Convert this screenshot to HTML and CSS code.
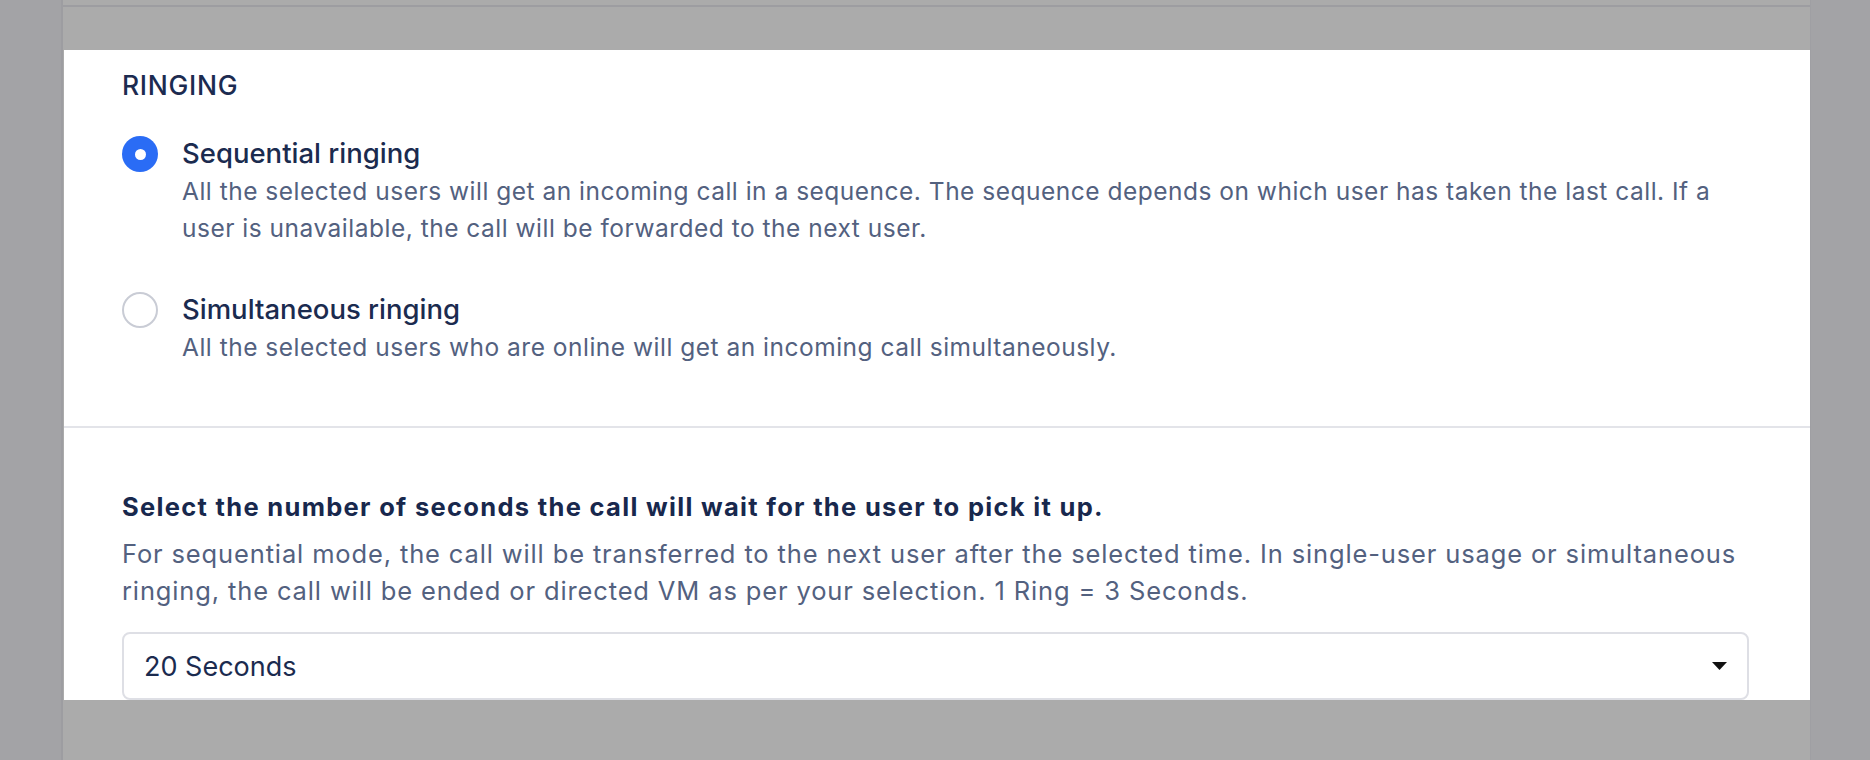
FILE: index.html
```html
<!DOCTYPE html>
<html lang="en">
<head>
<meta charset="utf-8">
<title>Ringing settings</title>
<link rel="stylesheet" href="styles.css">
</head>
<body>
<div class="page">
  <aside class="side side-left"></aside>
  <main class="main">
    <div class="topbar"></div>
    <section class="card">
      <div class="block block-ringing">
        <h2 class="section-title">RINGING</h2>
        <div class="option">
          <span class="radio radio-on"><span class="radio-dot"></span></span>
          <div class="option-text">
            <div class="option-title">Sequential ringing</div>
            <p class="option-desc">All the selected users will get an incoming call in a sequence. The sequence depends on which user has taken the last call. If a user is unavailable, the call will be forwarded to the next user.</p>
          </div>
        </div>
        <div class="option option-second">
          <span class="radio"></span>
          <div class="option-text">
            <div class="option-title">Simultaneous ringing</div>
            <p class="option-desc">All the selected users who are online will get an incoming call simultaneously.</p>
          </div>
        </div>
      </div>
      <div class="block block-wait">
        <h3 class="wait-title">Select the number of seconds the call will wait for the user to pick it up.</h3>
        <p class="wait-desc">For sequential mode, the call will be transferred to the next user after the selected time. In single-user usage or simultaneous ringing, the call will be ended or directed VM as per your selection. 1 Ring = 3 Seconds.</p>
        <div class="select">
          <span class="select-value">20 Seconds</span>
          <svg class="select-arrow" width="15" height="8" viewBox="0 0 15 8"><path d="M0 0H15L7.5 8Z" fill="#111"/></svg>
        </div>
      </div>
    </section>
  </main>
  <aside class="side side-right"></aside>
</div>
</body>
</html>
```
FILE: styles.css
```css
* { box-sizing: border-box; }
html, body { margin: 0; padding: 0; }
body {
  width: 1870px;
  height: 760px;
  overflow: hidden;
  background: #ababab;
  font-family: Inter, "Noto Sans", sans-serif;
}
.page {
  display: flex;
  height: 760px;
}
.side {
  background: #a3a3a6;
  flex: none;
}
.side-left {
  width: 63px;
  border-right: 2px solid #9d9da1;
}
.side-right {
  width: 60px;
  border-left: 1px solid #9f9fa3;
}
.main {
  flex: 1;
  display: flex;
  flex-direction: column;
  background: #ababab;
}
.topbar {
  height: 7px;
  border-bottom: 2px solid #9d9da1;
}
.card {
  margin-top: 43px;
  margin-left: 1px;
  height: 650px;
  background: #fff;
  overflow: hidden;
}
.block {
  padding: 0 61px 0 58px;
}
.block-ringing {
  padding-top: 17px;
  padding-bottom: 60px;
  border-bottom: 2px solid #e3e4e9;
}
.section-title {
  margin: 0;
  font-size: 26.5px;
  line-height: 36px;
  font-weight: 500;
  letter-spacing: 0.7px;
  color: #1c2b50;
}
.option {
  display: flex;
  align-items: flex-start;
  margin-top: 31px;
}
.option-second {
  margin-top: 43px;
}
.radio {
  flex: none;
  width: 36px;
  height: 36px;
  margin-top: 2px;
  margin-right: 24px;
  border-radius: 50%;
  border: 2px solid #c9ccd5;
  display: flex;
  align-items: center;
  justify-content: center;
}
.radio-on {
  border: none;
  background: #2a6cf5;
}
.radio-dot {
  width: 11px;
  height: 11px;
  border-radius: 50%;
  background: #fff;
}
.option-text {
  flex: 1;
}
.option-title {
  font-size: 27.5px;
  line-height: 38px;
  font-weight: 500;
  color: #1b2b4f;
}
.option-desc {
  margin: 1px 0 0;
  font-size: 24.5px;
  line-height: 37px;
  letter-spacing: 0.5px;
  color: #53617f;
}
.block-wait {
  padding-top: 60px;
}
.wait-title {
  margin: 0;
  font-size: 25.5px;
  line-height: 37px;
  font-weight: 700;
  letter-spacing: 1.31px;
  color: #18284d;
}
.wait-desc {
  margin: 10px 0 0;
  font-size: 25.5px;
  line-height: 37px;
  letter-spacing: 0.86px;
  color: #53617f;
}
.select {
  margin-top: 23px;
  height: 68px;
  border: 2px solid #dedfe5;
  border-radius: 8px;
  display: flex;
  align-items: center;
  justify-content: space-between;
  padding: 0 20px 0 20px;
}
.select-value {
  font-size: 27px;
  color: #1b2b4f;
}
.select-arrow {
  display: block;
}
```
